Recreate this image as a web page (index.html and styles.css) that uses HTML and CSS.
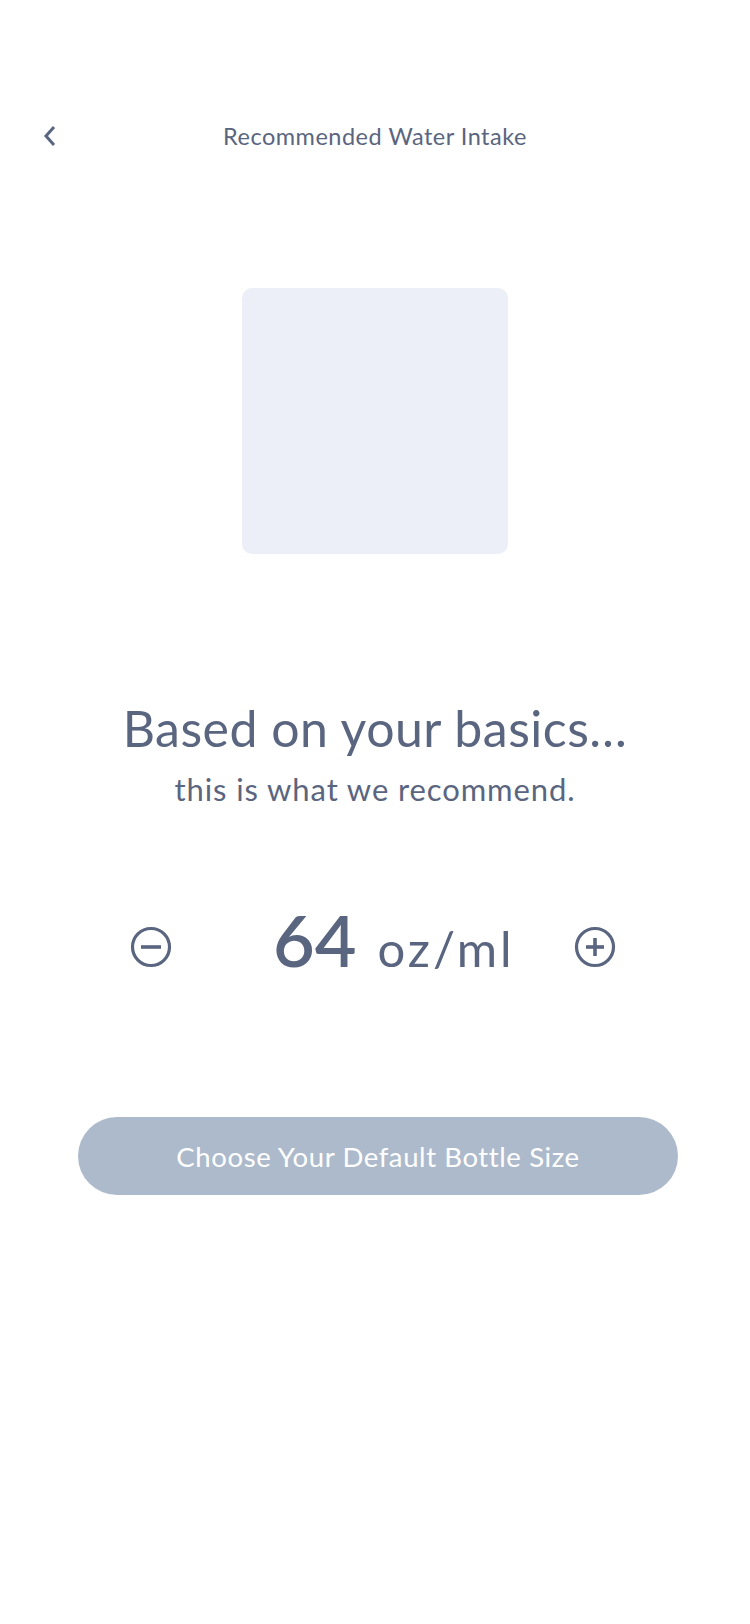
FILE: index.html
```html
<!DOCTYPE html>
<html lang="en">
<head>
<meta charset="utf-8">
<title>Recommended Water Intake</title>
<link rel="stylesheet" href="styles.css">
</head>
<body>
<div class="screen">
  <header class="topbar">
    <button class="back" aria-label="Back">
      <svg width="14" height="22" viewBox="0 0 14 22"><path d="M11 2 L3 11 L11 20" fill="none" stroke="#5a6580" stroke-width="3" stroke-linecap="butt" stroke-linejoin="miter"/></svg>
    </button>
    <h1 class="title">Recommended Water Intake</h1>
  </header>

  <div class="image-placeholder"></div>

  <section class="intro">
    <h2 class="headline">Based on your basics…</h2>
    <p class="sub">this is what we recommend.</p>
  </section>

  <section class="counter">
    <button class="round-btn" aria-label="Decrease">
      <svg width="42" height="42" viewBox="0 0 42 42"><circle cx="21" cy="21" r="18.5" fill="none" stroke="#5a6580" stroke-width="3.2"/><line x1="11" y1="21" x2="31" y2="21" stroke="#5a6580" stroke-width="3.6"/></svg>
    </button>
    <div class="amount"><span class="num">64</span><span class="unit">oz/ml</span></div>
    <button class="round-btn" aria-label="Increase">
      <svg width="42" height="42" viewBox="0 0 42 42"><circle cx="21" cy="21" r="18.5" fill="none" stroke="#5a6580" stroke-width="3.2"/><line x1="12" y1="21" x2="30" y2="21" stroke="#5a6580" stroke-width="3.6"/><line x1="21" y1="12" x2="21" y2="30" stroke="#5a6580" stroke-width="3.6"/></svg>
    </button>
  </section>

  <div class="cta-wrap">
    <button class="cta">Choose Your Default Bottle Size</button>
  </div>
</div>
</body>
</html>
```
FILE: styles.css
```css
* { box-sizing: border-box; }
html, body { margin: 0; padding: 0; background: #fff; }
body {
  font-family: Lato, "Open Sans", "Liberation Sans", sans-serif;
  color: #5a6580;
  width: 750px;
  height: 1624px;
}
.screen { display: flex; flex-direction: column; align-items: center; }
.topbar {
  position: relative;
  width: 100%;
  height: 72px;
  margin-top: 100px;
  display: flex;
  align-items: center;
  justify-content: center;
}
.back {
  position: absolute;
  left: 43px;
  top: 25px;
  background: none;
  border: 0;
  padding: 0;
  width: 14px;
  height: 22px;
  display: flex;
}
.title {
  margin: 0;
  font-weight: 400;
  font-size: 23.5px;
  letter-spacing: 0.5px;
  color: #5a6580;
}
.image-placeholder {
  width: 266px;
  height: 266px;
  margin-top: 116px;
  border-radius: 10px;
  background: #eceff8;
}
.intro { margin-top: 146px; text-align: center; }
.headline {
  margin: 0;
  font-weight: 400;
  font-size: 50px;
  line-height: 56px;
  letter-spacing: 0.5px;
}
.sub {
  margin: 13px 0 0;
  font-size: 31px;
  line-height: 40px;
  letter-spacing: 0.9px;
}
.counter {
  margin-top: 88px;
  width: 100%;
  display: flex;
  align-items: center;
  height: 100px;
  padding-left: 130px;
}
.round-btn {
  background: none;
  border: 0;
  padding: 0;
  width: 42px;
  height: 42px;
  display: flex;
}
.amount {
  width: 402px;
  padding-left: 101px;
  padding-bottom: 16px;
  display: flex;
  align-items: baseline;
  gap: 21px;
}
.num { font-size: 72px; font-weight: 600; }
.unit { font-size: 49px; font-weight: 400; letter-spacing: 3px; }
.cta-wrap { margin-top: 120px; width: 100%; display: flex; justify-content: center; padding-left: 6px; }
.cta {
  width: 600px;
  height: 78px;
  border: 0;
  border-radius: 39px;
  background: #adbacb;
  color: #fff;
  font-family: inherit;
  font-size: 27.5px;
  letter-spacing: 0.6px;
}
```
